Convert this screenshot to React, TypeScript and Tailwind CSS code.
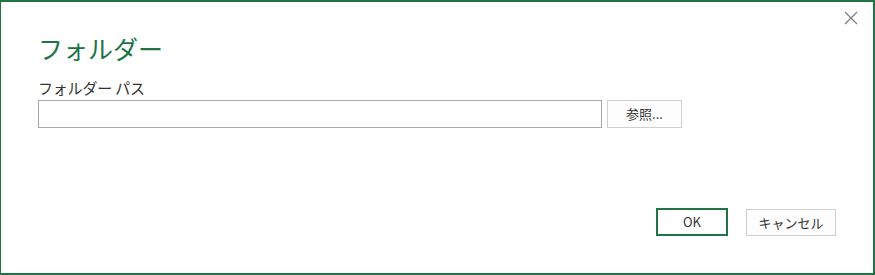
import React from "react";

export default function App() {
  const font = { fontFamily: '"Noto Sans CJK JP", "Noto Sans", sans-serif' };
  return (
    <div
      className="w-[875px] h-[275px] bg-white border-[#217346] border-t-2 border-l border-r-2 border-b-2 flex flex-col relative"
      style={font}
    >
      <button className="absolute right-[14px] top-[8px] w-[16px] h-[16px] flex items-center justify-center text-[#777]">
        <svg width="14" height="14" viewBox="0 0 14 14">
          <path d="M1 1 L13 13 M13 1 L1 13" stroke="#7a7a7a" strokeWidth="1.1" fill="none" />
        </svg>
      </button>
      <div className="pl-[37px] pt-[28px]">
        <div className="text-[25px] leading-[36px] text-[#217346]">フォルダー</div>
        <div className="mt-[12px] text-[15px] leading-[20px] text-[#333] tracking-[-0.2px]">フォルダー パス</div>
        <div className="mt-[2px] flex items-center gap-[5px]">
          <input className="w-[564px] h-[28px] border border-[#a6a6a6] bg-white outline-none" />
          <button className="w-[75px] h-[28px] border border-[#cfcfcf] bg-[#fdfdfd] text-[13px] text-[#333]">
            参照...
          </button>
        </div>
      </div>
      <div className="mt-[80px] flex justify-end pr-[37px] gap-[18px]">
        <button className="w-[72px] h-[28px] border-2 border-[#217346] bg-white text-[13px] text-[#333]">
          OK
        </button>
        <button className="w-[90px] h-[27px] mt-[1px] border border-[#cfcfcf] bg-[#fdfdfd] text-[13px] text-[#333]">
          キャンセル
        </button>
      </div>
    </div>
  );
}
